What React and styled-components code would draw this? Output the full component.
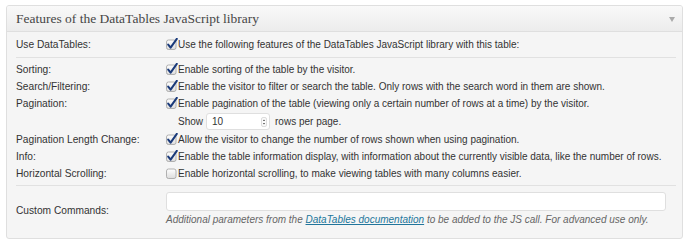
import React from "react";
import styled, { createGlobalStyle } from "styled-components";

const Global = createGlobalStyle`
  html, body { margin: 0; padding: 0; background: #fff; }
  body { font-family: "Liberation Sans", Arial, sans-serif; color: #333; }
`;

const Panel = styled.div`
  margin: 5px 7px 0 6px;
  border: 1px solid #dfdfdf;
  border-radius: 3px;
  background: #f5f5f5;
  overflow: hidden;
`;

const Header = styled.div`
  height: 25px;
  display: flex;
  align-items: center;
  justify-content: space-between;
  padding: 0 7px 0 9px;
  background: linear-gradient(to bottom, #f9f9f9, #ececec);
  border-bottom: 1px solid #dfdfdf;
`;

const Title = styled.h3`
  margin: 0;
  font-family: "Liberation Serif", "Times New Roman", serif;
  font-weight: normal;
  font-size: 13.5px;
  color: #464646;
  padding-top: 1px;
`;

const Toggle = styled.span`
  width: 0;
  height: 0;
  border-left: 3.5px solid transparent;
  border-right: 3.5px solid transparent;
  border-top: 5px solid #aaa;
  margin-top: 2px;
`;

const Body = styled.div`
  padding: 0 6px 0 9px;
  font-size: 10.2px;
`;

const Section = styled.div`
  display: grid;
  grid-template-columns: 150px 1fr;
  padding: ${(p) => p.$pad};
  border-top: ${(p) => (p.$sep ? "1px solid #e1e1e1" : "none")};
  line-height: 17px;
`;

const Label = styled.div`
  align-self: ${(p) => (p.$middle ? "center" : "start")};
  color: #333;
`;

const Cell = styled.div`
  display: flex;
  flex-direction: column;
  font-size: 10px;
`;

const Line = styled.label`
  display: flex;
  align-items: center;
  height: ${(p) => p.$h || 17}px;
  white-space: nowrap;
  padding-left: ${(p) => (p.$indent ? "12px" : "0")};
`;

const Box = styled.svg`
  width: 12px;
  height: 12px;
  flex: none;
  margin-top: -1px;
`;

const NumberField = styled.span`
  display: inline-flex;
  align-items: center;
  justify-content: space-between;
  box-sizing: border-box;
  width: 64px;
  height: 17px;
  margin: 0 5px 0 3px;
  padding: 0 2px 0 5px;
  background: #fff;
  border: 1px solid #dfdfdf;
  border-radius: 3px;
  color: #333;
`;

const Spinner = styled.svg`
  width: 6px;
  height: 10px;
`;

const TextField = styled.div`
  box-sizing: border-box;
  width: 500px;
  height: 19px;
  background: #fff;
  border: 1px solid #dfdfdf;
  border-radius: 3px;
  margin-bottom: 1px;
`;

const Description = styled.div`
  font-style: italic;
  color: #666;
  line-height: 16px;
`;

const Link = styled.a`
  color: #21759b;
  text-decoration: underline;
`;

function Check({ checked }) {
  return (
    <Box viewBox="0 0 12 12">
      <defs>
        <linearGradient id="cbg" x1="0" y1="0" x2="0" y2="1">
          <stop offset="0" stopColor="#ffffff" />
          <stop offset="1" stopColor="#dcdcdc" />
        </linearGradient>
      </defs>
      <rect x="0.5" y="2" width="9.5" height="9.5" rx="2" fill="url(#cbg)" stroke="#a0a0a0" strokeWidth="0.8" />
      {checked && (
        <path
          d="M2.2 6.6 L4.6 9.6 L10.8 0.8"
          fill="none"
          stroke="#1a3a7a"
          strokeWidth="2"
          strokeLinecap="round"
          strokeLinejoin="round"
        />
      )}
    </Box>
  );
}

function Option({ checked = true, children }) {
  return (
    <Line>
      <Check checked={checked} />
      {children}
    </Line>
  );
}

export default function App() {
  return (
    <>
      <Global />
      <Panel>
        <Header>
          <Title>Features of the DataTables JavaScript library</Title>
          <Toggle />
        </Header>
        <Body>
          <Section $pad="4px 0 4px">
            <Label>Use DataTables:</Label>
            <Cell>
              <Option>Use the following features of the DataTables JavaScript library with this table:</Option>
            </Cell>
          </Section>
          <Section $sep $pad="3px 0 3px">
            <Label>Sorting:</Label>
            <Cell>
              <Option>Enable sorting of the table by the visitor.</Option>
            </Cell>
            <Label>Search/Filtering:</Label>
            <Cell>
              <Option>Enable the visitor to filter or search the table. Only rows with the search word in them are shown.</Option>
            </Cell>
            <Label>Pagination:</Label>
            <Cell>
              <Option>Enable pagination of the table (viewing only a certain number of rows at a time) by the visitor.</Option>
              <Line $indent $h={19}>
                Show
                <NumberField>
                  10
                  <Spinner viewBox="0 0 6 10">
                    <rect x="0.5" y="0.5" width="5" height="9" rx="1.5" fill="#fafafa" stroke="#c8c8c8" strokeWidth="0.6" />
                    <path d="M1.8 4 L3 2.6 L4.2 4 Z M1.8 6 L3 7.4 L4.2 6 Z" fill="#555" />
                  </Spinner>
                </NumberField>
                rows per page.
              </Line>
            </Cell>
            <Label>Pagination Length Change:</Label>
            <Cell>
              <Option>Allow the visitor to change the number of rows shown when using pagination.</Option>
            </Cell>
            <Label>Info:</Label>
            <Cell>
              <Option>Enable the table information display, with information about the currently visible data, like the number of rows.</Option>
            </Cell>
            <Label>Horizontal Scrolling:</Label>
            <Cell>
              <Option checked={false}>Enable horizontal scrolling, to make viewing tables with many columns easier.</Option>
            </Cell>
          </Section>
          <Section $sep $pad="6px 0 10px">
            <Label $middle>Custom Commands:</Label>
            <Cell>
              <TextField />
              <Description>
                Additional parameters from the <Link href="#">DataTables documentation</Link> to be added to the JS call. For advanced use only.
              </Description>
            </Cell>
          </Section>
        </Body>
      </Panel>
    </>
  );
}
